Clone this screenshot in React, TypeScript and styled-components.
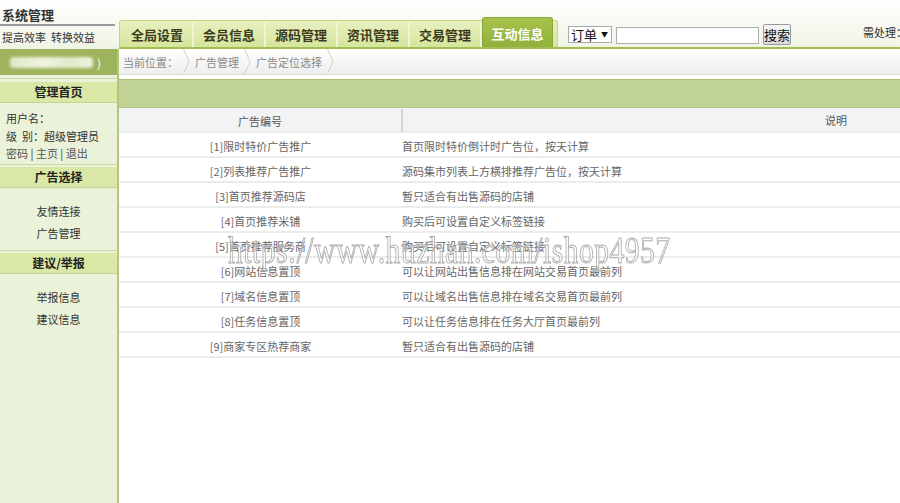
import React from "react";
import styled, { createGlobalStyle } from "styled-components";

const Global = createGlobalStyle`
  html, body { margin: 0; padding: 0; overflow: hidden; background: #fff; }
  body { font-family: "Noto Sans CJK SC", "Liberation Sans", sans-serif; color: #333; }
  * { box-sizing: border-box; }
`;

const Page = styled.div`
  position: relative;
  width: 1270px;
  min-height: 503px;
  display: flex;
  flex-direction: column;
`;

const Header = styled.header`
  display: flex;
  height: 49px;
  background: linear-gradient(#ffffff, #f0f4e4);
`;

const Brand = styled.div`
  width: 117px;
  flex: none;
  padding-top: 6px;
`;

const BrandTitle = styled.div`
  font-size: 13px;
  font-weight: bold;
  line-height: 17px;
  color: #333;
  padding: 0 0 1px 2px;
  margin-right: 2px;
  border-bottom: 2px solid #9a9a9a;
`;

const Slogan = styled.div`
  font-size: 11px;
  line-height: 14px;
  color: #333;
  padding: 4px 0 0 2px;
  white-space: nowrap;
`;

const Nav = styled.nav`
  flex: 1;
  display: flex;
  align-items: flex-end;
  margin-left: 2px;
  border-bottom: 2px solid #a2bd50;
`;

const TabStrip = styled.div`
  display: flex;
  align-items: flex-end;
  height: 27px;
  padding: 0 4px 0 2px;
  background: linear-gradient(#e7f0c0, #d6e59c);
  border: 1px solid #c4d787;
  border-bottom: none;
  border-radius: 3px 3px 0 0;
`;

const Tab = styled.div<{ $active?: boolean }>`
  width: ${(p) => (p.$active ? "71px" : "72px")};
  height: ${(p) => (p.$active ? "30px" : "25px")};
  line-height: ${(p) => (p.$active ? "32px" : "25px")};
  text-align: center;
  font-size: 13px;
  font-weight: bold;
  white-space: nowrap;
  color: ${(p) => (p.$active ? "#ffffff" : "#3b3b1c")};
  background: ${(p) => (p.$active ? "linear-gradient(#a7c24d, #91b13a)" : "transparent")};
  border-right: ${(p) => (p.$active ? "1px solid #8aa936" : "2px solid #eef5d3")};
  border-left: ${(p) => (p.$active ? "1px solid #8aa936" : "none")};
  border-top: ${(p) => (p.$active ? "1px solid #8aa936" : "none")};
  border-radius: ${(p) => (p.$active ? "3px 3px 0 0" : "0")};
`;

const SearchBar = styled.div`
  display: flex;
  align-items: center;
  gap: 4px;
  margin: 0 0 2px 10px;
  height: 22px;
`;

const FakeSelect = styled.div`
  display: flex;
  align-items: center;
  justify-content: space-between;
  width: 44px;
  height: 17px;
  padding: 0 3px 0 2px;
  background: #fff;
  border: 1px solid #a9a9a9;
  font-size: 13px;
  color: #111;
  line-height: 15px;
`;

const Caret = styled.span`
  font-size: 7px;
  color: #111;
`;

const SearchInput = styled.input`
  width: 143px;
  height: 17px;
  margin-top: 2px;
  border: 1px solid #abadb3;
  background: #fff;
  padding: 0;
  font-size: 12px;
`;

const SearchButton = styled.button`
  width: 28px;
  height: 21px;
  padding: 0;
  font-family: "Noto Sans CJK SC", sans-serif;
  font-size: 13px;
  color: #111;
  background: linear-gradient(#f6f6f6, #dadada);
  border: 1px solid #9a9a9a;
  border-radius: 2px;
`;

const Pending = styled.div`
  align-self: flex-end;
  margin: 0 0 8px 72px;
  font-size: 11px;
  line-height: 14px;
  color: #333;
  white-space: nowrap;
`;

const Body = styled.div`
  flex: 1;
  display: flex;
  min-height: 454px;
`;

const Sidebar = styled.aside`
  width: 119px;
  flex: none;
  background: #eaf2d9;
  border-right: 2px solid #b3c67a;
`;

const Badge = styled.div`
  display: flex;
  align-items: center;
  gap: 4px;
  height: 26px;
  padding: 0 16px 0 10px;
  background: #9db45d;
`;

const BlurBlock = styled.div`
  flex: 1;
  height: 11px;
  border-radius: 4px;
  background: linear-gradient(90deg, #dfe7c6, #f0f4e2 40%, #e2e9cb 70%, #eef2de);
  filter: blur(1.5px);
`;

const Paren = styled.span`
  color: #fff;
  font-size: 12px;
`;

const Section = styled.div<{ $tight?: boolean }>`
  margin-top: ${(p) => (p.$tight ? "1px" : "3px")};
  border-top: 1px solid #cbd8a6;
  padding-top: ${(p) => (p.$tight ? "2px" : "3px")};
`;

const SectionTitle = styled.div`
  height: 21px;
  line-height: 20px;
  text-align: center;
  font-size: 12px;
  font-weight: bold;
  color: #222;
  background: #dae8a5;
  border-bottom: 1px solid #c4d393;
`;

const UserInfo = styled.div`
  padding: 7px 6px 0;
  font-size: 11px;
  line-height: 17.5px;
  color: #333;
`;

const Muted = styled.span`
  color: #555;
`;

const LinkList = styled.div`
  display: flex;
  flex-direction: column;
  align-items: center;
  padding: 12px 0 5px;
`;

const SideLink = styled.a`
  display: block;
  font-size: 11px;
  line-height: 22px;
  color: #333;
  text-decoration: none;
`;

const Main = styled.main`
  flex: 1;
  display: flex;
  flex-direction: column;
`;

const Breadcrumb = styled.div`
  display: flex;
  align-items: stretch;
  height: 26px;
  padding-left: 4px;
  background: linear-gradient(#ffffff, #eeeeee);
  border-bottom: 1px solid #dadada;
  font-size: 11px;
  color: #8a8a8a;
`;

const Crumb = styled.span`
  display: flex;
  align-items: center;
  gap: 5px;
  padding-right: 5px;
  white-space: nowrap;
`;

const Chevron = () => (
  <svg width="7" height="25" viewBox="0 0 7 25">
    <polyline points="0.5,0 6,12.5 0.5,25" fill="none" stroke="#d2d2d2" strokeWidth="1" />
  </svg>
);

const GreenBar = styled.div`
  margin-top: 4px;
  height: 29px;
  background: #c0d395;
  border-top: 1px solid #a7bf72;
  border-bottom: 1px solid #b3c886;
`;

const Row = styled.div<{ $head?: boolean }>`
  display: grid;
  grid-template-columns: 283px 1fr;
  height: 25px;
  font-size: 11px;
  color: ${(p) => (p.$head ? "#555" : "#666")};
  background: ${(p) => (p.$head ? "#f2f3f5" : "#fff")};
  border-bottom: 2px solid #ececec;
`;

const NameCell = styled.div<{ $head?: boolean }>`
  text-align: center;
  line-height: ${(p) => (p.$head ? "24px" : "26px")};
  border-right: ${(p) => (p.$head ? "2px solid #d6d6d6" : "none")};
  margin: ${(p) => (p.$head ? "1px -1px 0 0" : "0")};
  white-space: nowrap;
`;

const DescCell = styled.div<{ $head?: boolean }>`
  text-align: ${(p) => (p.$head ? "center" : "left")};
  line-height: ${(p) => (p.$head ? "25px" : "26px")};
  white-space: nowrap;
`;

const Watermark = styled.div`
  position: absolute;
  left: 228px;
  top: 231px;
  font-family: "Liberation Serif", serif;
  font-size: 37px;
  line-height: 40px;
  color: rgba(255, 255, 255, 0.35);
  -webkit-text-stroke: 1px #adadad;
  letter-spacing: 0.6px;
  transform: scaleX(0.8);
  transform-origin: left top;
  white-space: nowrap;
  pointer-events: none;
`;

const tabs = ["全局设置", "会员信息", "源码管理", "资讯管理", "交易管理", "互动信息"];

const ads = [
  ["[1]限时特价广告推广", "首页限时特价倒计时广告位，按天计算"],
  ["[2]列表推荐广告推广", "源码集市列表上方横排推荐广告位，按天计算"],
  ["[3]首页推荐源码店", "暂只适合有出售源码的店铺"],
  ["[4]首页推荐米铺", "购买后可设置自定义标签链接"],
  ["[5]首页推荐服务商", "购买后可设置自定义标签链接"],
  ["[6]网站信息置顶", "可以让网站出售信息排在网站交易首页最前列"],
  ["[7]域名信息置顶", "可以让域名出售信息排在域名交易首页最前列"],
  ["[8]任务信息置顶", "可以让任务信息排在任务大厅首页最前列"],
  ["[9]商家专区热荐商家", "暂只适合有出售源码的店铺"],
];

export default function App() {
  return (
    <Page>
      <Global />
      <Header>
        <Brand>
          <BrandTitle>系统管理</BrandTitle>
          <Slogan>提高效率&nbsp;&nbsp;转换效益</Slogan>
        </Brand>
        <Nav>
          <TabStrip>
            {tabs.map((t, i) => (
              <Tab key={t} $active={i === tabs.length - 1}>
                {t}
              </Tab>
            ))}
          </TabStrip>
          <SearchBar>
            <FakeSelect>
              订单<Caret>▼</Caret>
            </FakeSelect>
            <SearchInput type="text" />
            <SearchButton>搜索</SearchButton>
          </SearchBar>
          <Pending>需处理：</Pending>
        </Nav>
      </Header>
      <Body>
        <Sidebar>
          <Badge>
            <BlurBlock />
            <Paren>)</Paren>
          </Badge>
          <Section>
            <SectionTitle>管理首页</SectionTitle>
          </Section>
          <UserInfo>
            <div>用户名：</div>
            <div>级&nbsp;&nbsp;别：超级管理员</div>
            <div>
              <Muted>密码</Muted> | <Muted>主页</Muted> | <Muted>退出</Muted>
            </div>
          </UserInfo>
          <Section $tight>
            <SectionTitle>广告选择</SectionTitle>
          </Section>
          <LinkList>
            <SideLink>友情连接</SideLink>
            <SideLink>广告管理</SideLink>
          </LinkList>
          <Section $tight>
            <SectionTitle>建议/举报</SectionTitle>
          </Section>
          <LinkList>
            <SideLink>举报信息</SideLink>
            <SideLink>建议信息</SideLink>
          </LinkList>
        </Sidebar>
        <Main>
          <Breadcrumb>
            <Crumb>当前位置：<Chevron /></Crumb>
            <Crumb>广告管理<Chevron /></Crumb>
            <Crumb>广告定位选择<Chevron /></Crumb>
          </Breadcrumb>
          <GreenBar />
          <Row $head>
            <NameCell $head>广告编号</NameCell>
            <DescCell $head>说明</DescCell>
          </Row>
          {ads.map(([name, desc]) => (
            <Row key={name}>
              <NameCell>{name}</NameCell>
              <DescCell>{desc}</DescCell>
            </Row>
          ))}
        </Main>
      </Body>
      <Watermark>https://www.huzhan.com/ishop4957</Watermark>
    </Page>
  );
}
